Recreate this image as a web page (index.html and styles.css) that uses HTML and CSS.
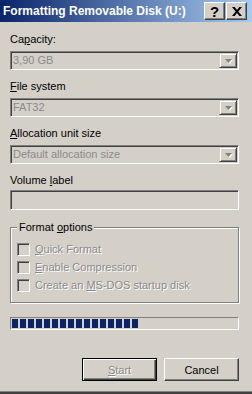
FILE: index.html
```html
<!DOCTYPE html>
<html lang="en">

<head>
  <meta charset="UTF-8" />
  <title>Formatting Removable Disk (U:)</title>
  <link rel="stylesheet" href="styles.css">
</head>

<body>
  <div class="window">

    <!-- title bar -->
    <div class="titlebar">
      <span class="title">Formatting Removable Disk (U:)</span>
      <span class="cap-btn help">?</span>
      <span class="cap-btn close">
        <svg width="10" height="9" viewBox="0 0 10 9">
          <path d="M0 0h2.6l2.4 3 2.4-3H10L6.3 4.5 10 9H7.4L5 6 2.6 9H0l3.7-4.5z" fill="#000" />
        </svg>
      </span>
    </div>

    <div class="content">
      <label class="field-label lbl-first">Ca<u>p</u>acity:</label>
      <div class="combo">
        <span class="combo-text">3,90 GB</span>
        <span class="combo-btn"><svg width="7" height="4" viewBox="0 0 7 4"><path d="M0 0h7L3.5 4z" fill="#808080" /></svg></span>
      </div>

      <label class="field-label"><u>F</u>ile system</label>
      <div class="combo">
        <span class="combo-text">FAT32</span>
        <span class="combo-btn"><svg width="7" height="4" viewBox="0 0 7 4"><path d="M0 0h7L3.5 4z" fill="#808080" /></svg></span>
      </div>

      <label class="field-label"><u>A</u>llocation unit size</label>
      <div class="combo">
        <span class="combo-text">Default allocation size</span>
        <span class="combo-btn"><svg width="7" height="4" viewBox="0 0 7 4"><path d="M0 0h7L3.5 4z" fill="#808080" /></svg></span>
      </div>

      <label class="field-label">Volume <u>l</u>abel</label>
      <div class="textbox"></div>

      <fieldset class="group">
        <legend>Format <u>o</u>ptions</legend>
        <div class="check-row"><span class="checkbox"></span><span class="disabled"><u>Q</u>uick Format</span></div>
        <div class="check-row"><span class="checkbox"></span><span class="disabled"><u>E</u>nable Compression</span></div>
        <div class="check-row"><span class="checkbox"></span><span class="disabled">Create an <u>M</u>S-DOS startup disk</span></div>
      </fieldset>

      <div class="progress" id="progress"></div>

      <div class="buttons">
        <span class="btn btn-default"><span class="disabled"><u>S</u>tart</span></span>
        <span class="btn">Cancel</span>
      </div>
    </div>
  </div>

  <script>
    // progress blocks
    const progress = document.getElementById('progress');
    for (let i = 0; i < 16; i++) {
      const b = document.createElement('span');
      b.className = 'block';
      progress.appendChild(b);
    }
  </script>
</body>

</html>
```

FILE: styles.css
```css
body {
  margin: 0;
  background: #d4d0c8;
  font-family: "Liberation Sans", Arial, sans-serif;
  font-size: 11px;
  color: #000;
}

.window {
  width: 252px;
  height: 394px;
  box-sizing: border-box;
  background: #d4d0c8;
  border-bottom: 2px solid #404040;
  box-shadow: inset 0 -1px #808080;
  overflow: hidden;
}

u {
  text-decoration: underline;
  text-underline-offset: 1px;
}

/* title bar */
.titlebar {
  height: 22px;
  display: flex;
  align-items: center;
  padding: 0 5px 0 3px;
  background: linear-gradient(to right, #0a246a, #a6caf0);
}

.title {
  flex: 1;
  color: #fff;
  font-weight: bold;
  font-size: 12px;
  white-space: nowrap;
}

.cap-btn {
  width: 21px;
  height: 18px;
  box-sizing: border-box;
  display: flex;
  align-items: center;
  justify-content: center;
  background: #d4d0c8;
  border: 1px solid;
  border-color: #fff #404040 #404040 #fff;
  box-shadow: inset -1px -1px #808080;
}

.help {
  font-weight: bold;
  font-size: 15px;
  line-height: 15px;
}

.close {
  margin-left: 1px;
}

/* form */
.content {
  padding: 0 13px 0 10px;
}

.field-label {
  display: block;
  height: 13px;
  line-height: 13px;
  margin-top: 10px;
}

.lbl-first {
  margin-top: 11px;
}

.combo {
  margin-top: 5px;
  height: 19px;
  box-sizing: border-box;
  display: flex;
  align-items: center;
  border: 1px solid;
  border-color: #808080 #fff #fff #808080;
  box-shadow: inset 1px 1px #404040, inset -1px -1px #d4d0c8;
  padding: 1px 1px 1px 2px;
}

.combo-text {
  flex: 1;
  color: #8a8a8a;
  line-height: 13px;
}

.combo-btn {
  width: 18px;
  height: 15px;
  box-sizing: border-box;
  display: flex;
  align-items: center;
  justify-content: center;
  border: 1px solid;
  border-color: #d4d0c8 #404040 #404040 #d4d0c8;
  box-shadow: inset 1px 1px #fff, inset -1px -1px #808080;
}

.combo-btn svg {
  filter: drop-shadow(1px 1px 0 #fff);
}

.textbox {
  margin-top: 3px;
  height: 20px;
  box-sizing: border-box;
  border: 1px solid;
  border-color: #808080 #fff #fff #808080;
  box-shadow: inset 1px 1px #404040, inset -1px -1px #d4d0c8;
}

/* group box */
.group {
  margin: 11px 0 0;
  padding: 0 0 10px 6px;
  border: 1px solid #808080;
  box-shadow: inset 1px 1px #fff, 1px 1px #fff;
  display: flex;
  flex-direction: column;
  gap: 5px;
}

.group legend {
  padding: 0 2px;
  margin-left: 0;
  line-height: 13px;
  background: #d4d0c8;
}

.check-row {
  display: flex;
  align-items: center;
  gap: 5px;
  height: 13px;
  line-height: 13px;
}

.check-row:first-of-type {
  margin-top: 9px;
}

.checkbox {
  width: 13px;
  height: 13px;
  box-sizing: border-box;
  border: 1px solid;
  border-color: #808080 #fff #fff #808080;
  box-shadow: inset 1px 1px #404040, inset -1px -1px #d4d0c8;
}

.disabled {
  color: #8a8a8a;
  text-shadow: 1px 1px 0 #fff;
}

/* progress bar */
.progress {
  margin-top: 14px;
  height: 13px;
  box-sizing: border-box;
  padding: 1px;
  border: 1px solid;
  border-color: #808080 #fff #fff #808080;
  display: flex;
  gap: 2px;
}

.block {
  width: 6px;
  height: 9px;
  background: #0a246a;
}

/* buttons */
.buttons {
  margin-top: 28px;
  display: flex;
  justify-content: flex-end;
  gap: 7px;
}

.btn {
  width: 75px;
  height: 23px;
  box-sizing: border-box;
  display: flex;
  align-items: center;
  justify-content: center;
  border: 1px solid;
  border-color: #fff #404040 #404040 #fff;
  box-shadow: inset -1px -1px #808080;
}

.btn-default {
  border-color: #000;
  box-shadow: inset 1px 1px #fff, inset -1px -1px #404040, inset -2px -2px #808080;
}
```
